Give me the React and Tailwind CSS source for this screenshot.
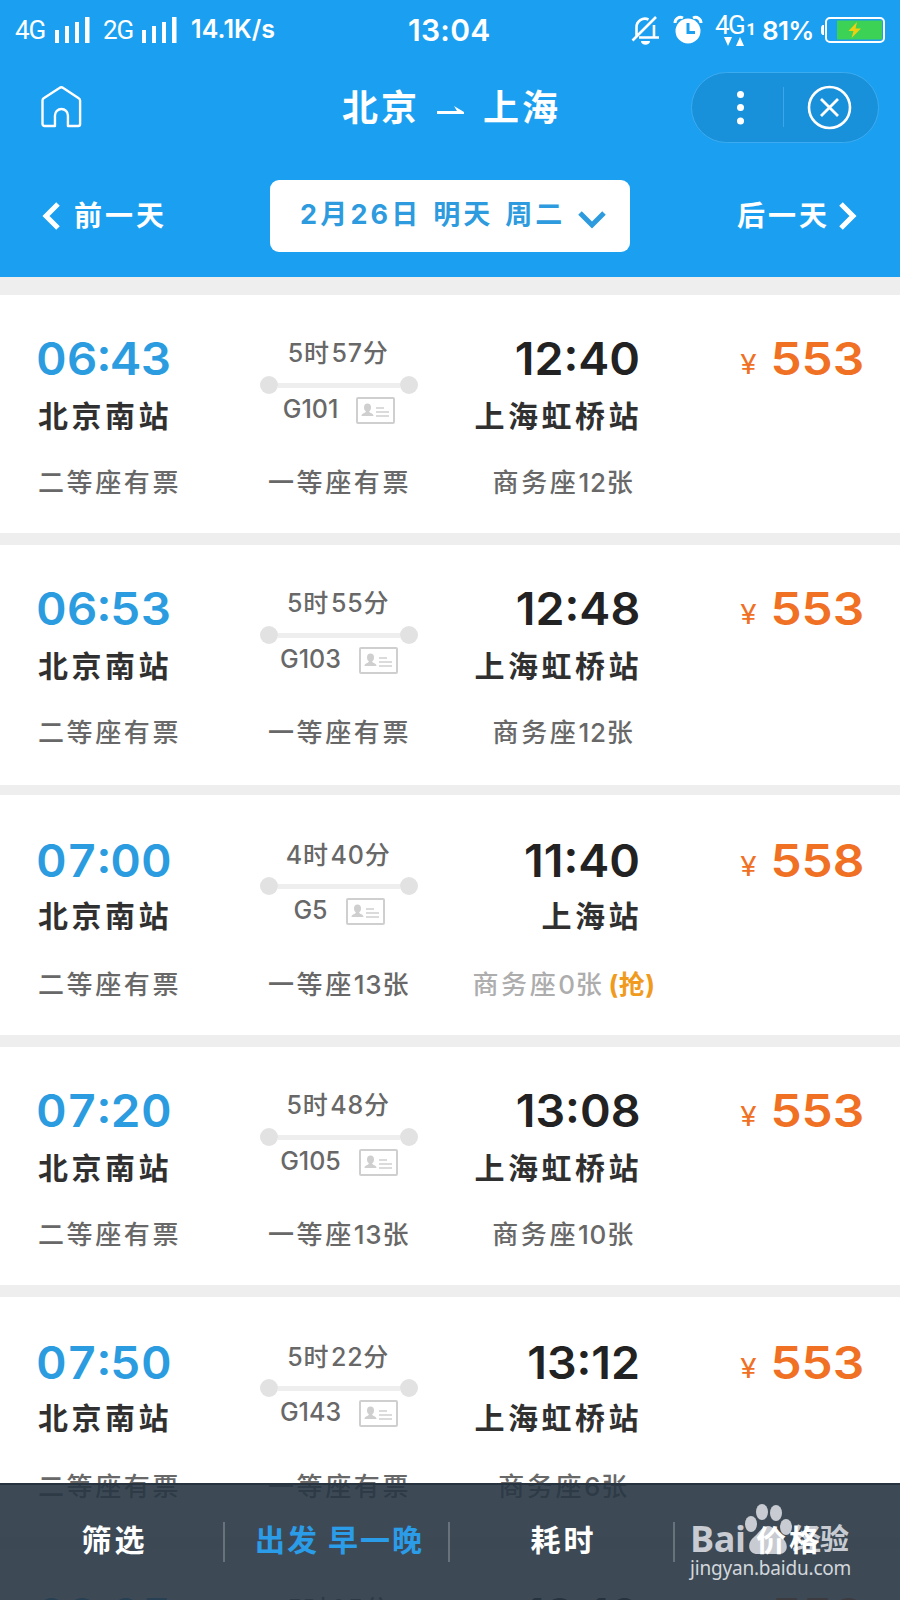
import React from "react";

const trains = [
  { dep: "06:43", arr: "12:40", to: "上海虹桥站", dur: "5时57分", no: "G101", price: "553", second: "二等座有票", first: "一等座有票", biz: "商务座12张", h: "h-[238px]", gap: "h-3" },
  { dep: "06:53", arr: "12:48", to: "上海虹桥站", dur: "5时55分", no: "G103", price: "553", second: "二等座有票", first: "一等座有票", biz: "商务座12张", h: "h-[240px]", gap: "h-[10px]" },
  { dep: "07:00", arr: "11:40", to: "上海站", dur: "4时40分", no: "G5", price: "558", second: "二等座有票", first: "一等座13张", biz: "商务座0张", grab: true, low: true, h: "h-[240px]", gap: "h-3" },
  { dep: "07:20", arr: "13:08", to: "上海虹桥站", dur: "5时48分", no: "G105", price: "553", second: "二等座有票", first: "一等座13张", biz: "商务座10张", h: "h-[238px]", gap: "h-3" },
  { dep: "07:50", arr: "13:12", to: "上海虹桥站", dur: "5时22分", no: "G143", price: "553", second: "二等座有票", first: "一等座有票", biz: "商务座6张", low: true, h: "h-[240px]", gap: "h-3" },
  { dep: "08:05", arr: "13:10", to: "上海虹桥站", dur: "5时05分", no: "G107", price: "553", second: "二等座有票", first: "一等座有票", biz: "商务座8张", low: true, h: "h-[238px]", gap: "h-3" },
];

function Mixed({ text }) {
  return text.split(/([0-9]+)/).map((part, i) =>
    /^[0-9]+$/.test(part) ? (
      <span key={i} className="tracking-[0.8px]">{part}</span>
    ) : (
      <span key={i}>{part}</span>
    )
  );
}

function Signal() {
  return (
    <svg width="35" height="26" viewBox="0 0 35 26" fill="#fff">
      <rect x="0" y="13" width="4" height="13" />
      <rect x="10" y="9" width="4" height="17" />
      <rect x="20" y="5" width="4" height="21" />
      <rect x="30" y="0" width="4.5" height="26" />
    </svg>
  );
}

function StatusBar() {
  return (
    <div className="flex h-[60px] items-center pl-[15px] pr-[15px]">
      <div className="flex w-[393px] items-center">
        <span className="w-[40px] font-[Roboto] text-[26px] tracking-[-1px]">4G</span>
        <Signal />
        <span className="ml-[13px] w-[39px] font-[Roboto] text-[26px] tracking-[-1px]">2G</span>
        <Signal />
        <span className="ml-[14px] text-[25px] font-semibold tracking-[0.1px]">14.1K/s</span>
      </div>
      <span className="w-[222px] text-[30px] font-semibold leading-[30px] tracking-[0.3px]">13:04</span>
      <svg width="32" height="30" viewBox="0 0 32 30" fill="none" stroke="#fff" strokeWidth="2.6">
        <path d="M6.500 22V12.500a8.500 8.500 0 0 1 12-8M24 10v12M9 22.500h20M2.500 25.500L26 2" />
        <path d="M11 26h9c0 5-9 5-9 0z" fill="#fff" stroke="none" />
      </svg>
      <svg className="ml-[11px]" width="30" height="30" viewBox="0 0 30 30">
        <circle cx="15" cy="16" r="12.500" fill="#fff" />
        <path d="M2 8c0-4 4-7 8-5M28 8c0-4-4-7-8-5" fill="none" stroke="#fff" strokeWidth="3" />
        <path d="M15 8v9.500h7" fill="none" stroke="#1b9ff0" strokeWidth="3" />
      </svg>
      <div className="ml-[12px] flex w-[47px] flex-col">
        <div className="flex items-end font-[Roboto] text-[26px] leading-[22px] tracking-[-1.500px]">
          4G<span className="ml-[2px] text-[17px] font-bold leading-[14px]">1</span>
        </div>
        <svg className="ml-[9px] mt-[1px]" width="22" height="9" viewBox="0 0 22 9" fill="#fff">
          <path d="M0 0h8L4 9zM12 9h8L16 0z" />
        </svg>
      </div>
      <span className="w-[59px] text-[26px] font-semibold tracking-[-0.700px]">81%</span>
      <svg width="64" height="26" viewBox="0 0 64 26">
        <path d="M3 8v10c-3 0-3-2-3-5s0-5 3-5z" fill="#fff" />
        <rect x="5" y="1" width="58" height="24" rx="4" fill="none" stroke="#fff" strokeWidth="2" />
        <rect x="16" y="3.500" width="45" height="19" fill="#3cd255" />
        <path d="M36 5l-8.500 9h5l-2 7 9.500-9.500h-5.500z" fill="#f0cf10" />
      </svg>
    </div>
  );
}

function Header() {
  return (
    <header className="h-[277px] bg-[#1b9ff0] text-white">
      <StatusBar />
      <div className="flex h-[94px] items-center pl-[41px] pr-[21px]">
        <svg width="41" height="42" viewBox="0 0 41 42" fill="none" stroke="#fff" strokeWidth="2.4" strokeLinejoin="round">
          <path d="M14 40H3.500a2 2 0 0 1-2-2V14.500a3 3 0 0 1 1.200-2.200L18.500 2a3 3 0 0 1 3.800 0L37.800 12.300a3 3 0 0 1 1.400 2.200V38a2 2 0 0 1-2 2H27V29.500a6.500 6.500 0 0 0-13 0z" />
        </svg>
        <div className="ml-[260px] flex w-[350px] items-center pt-[2px] text-[36px] font-bold leading-[40px] tracking-[3px]">
          <span>北京</span>
          <svg className="ml-[17px] mr-[18px] mt-[6px]" width="28" height="10" viewBox="0 0 28 10">
            <path d="M0 5h20l-3-5 10 6v2H0z" fill="#fff" />
          </svg>
          <span>上海</span>
        </div>
        <div className="flex h-[71px] w-[188px] items-center rounded-full border border-[#3dabf0] bg-[#1890da]">
          <svg width="186" height="69" viewBox="0 0 186 69" fill="none" stroke="#fff">
            <g fill="#fff" stroke="none">
              <circle cx="48.500" cy="21.500" r="3.500" />
              <circle cx="48.500" cy="34.500" r="3.500" />
              <circle cx="48.500" cy="48" r="3.500" />
            </g>
            <path d="M91.500 14v40" stroke="#3ba6e8" />
            <circle cx="137.500" cy="34.500" r="20.500" strokeWidth="2.600" />
            <path d="M129 26l17 17M146 26l-17 17" strokeWidth="2.800" />
          </svg>
        </div>
      </div>
      <div className="flex items-center justify-between pl-[42px] pr-[43px] pt-[26px] text-[28px] font-bold">
        <div className="flex w-[228px] items-center tracking-[3px]">
          <svg width="18" height="28" viewBox="0 0 18 28" fill="none" stroke="#fff" strokeWidth="5">
            <path d="M16 2L4 14l12 12" />
          </svg>
          <span className="ml-[14px]">前一天</span>
        </div>
        <div className="flex h-[72px] w-[360px] items-center rounded-[9px] bg-white pl-[30px] text-[27px] tracking-[3.200px] text-[#2d9bde]">
          <span className="w-[264px] whitespace-nowrap pb-[2px] leading-[36px] [word-spacing:2px]">2月26日 明天 周二</span>
          <svg className="ml-[14px] mt-[7px]" width="28" height="18" viewBox="0 0 28 18" fill="none" stroke="#2d9bde" strokeWidth="5">
            <path d="M2 2l12 12L26 2" />
          </svg>
        </div>
        <div className="flex w-[227px] items-center justify-end tracking-[3px]">
          <span>后一天</span>
          <svg className="ml-[9px]" width="18" height="28" viewBox="0 0 18 28" fill="none" stroke="#fff" strokeWidth="5">
            <path d="M2 2l12 12L2 26" />
          </svg>
        </div>
      </div>
    </header>
  );
}

function IdCard() {
  return (
    <svg width="39" height="27" viewBox="0 0 39 27" fill="none" stroke="#cfcfcf" strokeWidth="2">
      <rect x="1" y="1" width="37" height="25" rx="1" />
      <ellipse cx="11.500" cy="10.500" rx="3.500" ry="4" fill="#cfcfcf" stroke="none" />
      <path d="M5.500 19c0-3 4-2.500 4.500-5h3c.5 2.500 4.500 2 4.500 5z" fill="#cfcfcf" stroke="none" />
      <path d="M20 11h8M20 15h13M20 19h13" strokeWidth="1.500" />
    </svg>
  );
}

function TrainCard({ t }) {
  return (
    <>
      <section className={`${t.h} bg-white`}>
        <div className={`flex pl-[38px] ${t.low ? "h-[175px] pt-[41px]" : "h-[173px] pt-[39px]"}`}>
          <div className="flex w-[222px] flex-col items-start">
            <span className="ml-[-2px] origin-left scale-x-[1.055] text-[45px] font-semibold leading-[50px] tabular-nums text-[#2b9ce0]">{t.dep}</span>
            <span className={`text-[30px] font-bold leading-[30px] tracking-[3.500px] text-[#303030] ${t.low ? "mt-[15px]" : "mt-[17px]"}`}>北京南站</span>
          </div>
          <div className="flex w-[158px] flex-col items-center text-[#686868]">
            <span className="mt-[5px] text-[25px] font-medium leading-[28px] tracking-[2.500px]"><Mixed text={t.dur} /></span>
            <div className={`flex items-center ${t.low ? "mt-[8px]" : "mt-[9px]"}`}>
              <span className="size-[18px] rounded-full bg-[#e2e2e2]" />
              <span className="h-[5px] w-[122px] bg-[#eeeeee]" />
              <span className="size-[18px] rounded-full bg-[#e2e2e2]" />
            </div>
            <div className="flex h-[30px] items-center gap-[18px]">
              <span className="text-[25px] font-medium leading-[26px]">{t.no}</span>
              <span className="mt-[3px]"><IdCard /></span>
            </div>
          </div>
          <div className="flex w-[222px] flex-col items-end">
            <span className="origin-right scale-x-[1.035] text-[45px] font-semibold leading-[50px] text-[#222222]">{t.arr}</span>
            <span className={`mr-[-2px] text-[30px] font-bold leading-[30px] tracking-[3.500px] text-[#303030] ${t.low ? "mt-[15px]" : "mt-[17px]"}`}>{t.to}</span>
          </div>
          <div className="flex w-[224px] items-baseline justify-end gap-[23px] self-start text-[#f07024]">
            <span className="relative top-[-1px] scale-x-[1.1] text-[27px] leading-[50px]">¥</span>
            <span className="origin-right scale-x-[1.1] text-[45px] font-semibold leading-[50px]">{t.price}</span>
          </div>
        </div>
        <div className="flex pl-[38px] text-[26px] font-medium leading-[30px] tracking-[2.600px] text-[#686868]">
          <span className="w-[190px]"><Mixed text={t.second} /></span>
          <span className="w-[223px] text-center"><Mixed text={t.first} /></span>
          <span className={`w-[226px] text-center ${t.grab ? "text-[#adadad]" : ""}`}>
            <Mixed text={t.biz} />
            {t.grab && <span className="ml-[4px] font-bold tracking-[0.500px] text-[#f09b1e]">(抢)</span>}
          </span>
        </div>
      </section>
      <div className={`${t.gap} bg-[#eeeeee]`} />
    </>
  );
}

function Watermark() {
  return (
    <div className="absolute right-[48px] top-[18px] flex w-[162px] flex-col text-[#d3d7dc]">
      <div className="flex h-[54px] items-end">
        <span className="w-[54px] font-['Open_Sans'] text-[36px] font-bold leading-[37px] tracking-[-0.500px] text-[#c8ccd2]">Bai</span>
        <svg width="48" height="54" viewBox="0 0 48 54" fill="#c8ccd2">
          <ellipse cx="7" cy="21" rx="6" ry="8" />
          <ellipse cx="18" cy="9" rx="6" ry="8" />
          <ellipse cx="32" cy="10" rx="6" ry="8" />
          <ellipse cx="42" cy="24" rx="6" ry="8" />
          <path d="M24 23c6 0 8 7 13 11 8 5 8 17-2 17H14C3 51 3 39 10 34c5-4 8-11 14-11z" />
        </svg>
        <span className="text-[29px] font-bold leading-[35px] tracking-[-1px] text-[#c8ccd2]">经验</span>
      </div>
      <span className="mt-[-2px] font-['Noto_Sans'] text-[19px] font-normal leading-[26px] tracking-[-0.200px]">jingyan.baidu.com</span>
    </div>
  );
}

function FilterBar() {
  return (
    <nav className="absolute inset-x-0 bottom-0 h-[117px] border-t-2 border-[#27333e] bg-[#283644]/90 pt-[20px] text-[30px] font-bold tracking-[3px] text-white">
      <Watermark />
      <div className="relative flex h-[70px] items-center">
        <span className="w-[223px] pl-[6px] text-center leading-[40px]">筛选</span>
        <span className="mt-[4px] h-[40px] w-[2px] bg-[#68727c]" />
        <span className="w-[223px] pl-[6px] text-center leading-[40px] tracking-[2px] text-[#2b9ce8]">出发 早一晚</span>
        <span className="mt-[4px] h-[40px] w-[2px] bg-[#68727c]" />
        <span className="w-[223px] pl-[4px] text-center leading-[40px]">耗时</span>
        <span className="mt-[4px] h-[40px] w-[2px] bg-[#68727c]" />
        <span className="w-[225px] pl-[3px] text-center leading-[40px]">价格</span>
      </div>
    </nav>
  );
}

export default function App() {
  return (
    <div className="relative h-[1600px] w-[900px] overflow-hidden bg-white font-['Inter','Noto_Sans_CJK_SC',sans-serif]">
      <Header />
      <div className="h-[18px] bg-[#eeeeee]" />
      <main>
        {trains.map((t) => (
          <TrainCard key={t.dep} t={t} />
        ))}
      </main>
      <FilterBar />
    </div>
  );
}
